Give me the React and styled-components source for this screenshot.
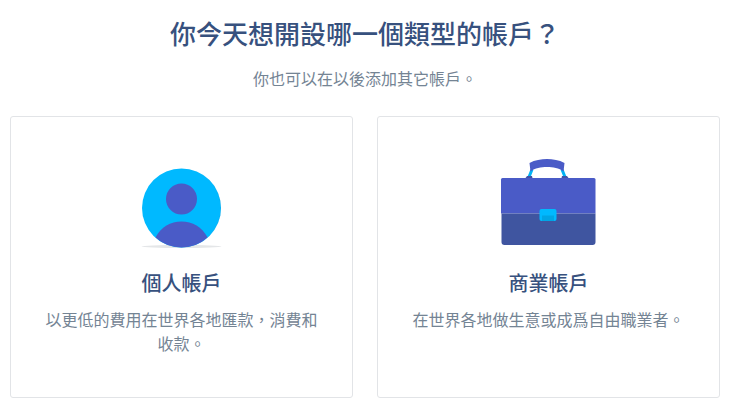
import styled, { createGlobalStyle } from "styled-components"

const GlobalStyle = createGlobalStyle`
    html, body {
        margin: 0;
        padding: 0;
        background-color: #FFFFFF;
    }
    * {
        box-sizing: border-box;
    }
`

function PersonIcon() {
    return (
        <svg width="100" height="84" viewBox="0 0 100 84">
            <ellipse cx="49.500" cy="78.500" rx="40" ry="1.500" fill="#E4E6E8" />
            <circle cx="49.500" cy="40" r="39.500" fill="#00B9FF" />
            <path d="M49.500 .5a39.500 39.500 0 0 1 0 79a39.200 39.500 0 0 0 0-79z" fill="#0A8FCB" opacity="0.6" />
            <circle cx="49.500" cy="31" r="15.500" fill="#4A5BC7" />
            <path d="M23.500 69.500C29 59 38.500 53.500 49.500 53.500S70 59 75.500 69.500A39.500 39.500 0 0 1 49.500 79.500A39.500 39.500 0 0 1 23.500 69.500z" fill="#4A5BC7" />
        </svg>
    )
}

function CaseIcon() {
    return (
        <svg width="100" height="96" viewBox="0 0 100 96">
            <path d="M33 13.500L30 21M63 13.500L66 21" fill="none" stroke="#00B4F5" strokeWidth="3" />
            <path d="M26.500 22l1.500-2h5l.5 2zM62.500 22l.5-2h5l1.500 2z" fill="#3F55A8" />
            <path d="M30.500 7C36 4 42 3 48 3S60 4 65.500 7L64.500 15.500C60 12 54 11 48 11S36 12 31.500 15.500z" fill="#4A5BC7" />
            <path d="M2 23.500A1.500 1.500 0 0 1 3.500 22H95A1.500 1.500 0 0 1 96.500 23.500V57.500H2z" fill="#4A5BC7" />
            <path d="M2.500 57.500H96.500V86A3 3 0 0 1 93.500 89H5.500A3 3 0 0 1 2.500 86z" fill="#3F55A0" />
            <rect x="40.500" y="53" width="17" height="12" rx="2" fill="#00B9FF" />
            <rect x="43" y="59.500" width="12" height="5.500" fill="#00A5E5" />
        </svg>
    )
}

export default function App() {
    return (
        <Page>
            <GlobalStyle />
            <Title>你今天想開設哪一個類型的帳戶？</Title>
            <Subtitle>你也可以在以後添加其它帳戶。</Subtitle>
            <Cards>
                <Card>
                    <IconBox><PersonIcon /></IconBox>
                    <CardTitle>個人帳戶</CardTitle>
                    <CardText>以更低的費用在世界各地匯款，消費和收款。</CardText>
                </Card>
                <Card>
                    <IconBox><CaseIcon /></IconBox>
                    <CardTitle>商業帳戶</CardTitle>
                    <CardText>在世界各地做生意或成爲自由職業者。</CardText>
                </Card>
            </Cards>
        </Page>
    )
}

const Page = styled.div`
    width: 735px;
    height: 413px;
    overflow: hidden;
    padding: 19px 15px 0 10px;
    font-family: "Liberation Sans", "Noto Sans CJK TC", sans-serif;
`

const Title = styled.h1`
    margin: 0;
    text-align: center;
    font-size: 26px;
    line-height: 32px;
    font-weight: 500;
    color: #37517E;
`

const Subtitle = styled.p`
    margin: 17px 0 0;
    text-align: center;
    font-size: 16px;
    line-height: 24px;
    color: #748494;
`

const Cards = styled.div`
    display: grid;
    grid-template-columns: 343px 343px;
    justify-content: space-between;
    margin-top: 24px;
`

const Card = styled.div`
    height: 282px;
    border: 1px solid #E2E4E7;
    border-radius: 3px;
    padding: 0 30px;
    display: flex;
    flex-direction: column;
    align-items: center;
`

const IconBox = styled.div`
    height: 96px;
    margin-top: 39px;
    display: flex;
    align-items: flex-end;
    justify-content: center;
`

const CardTitle = styled.h2`
    margin: 19px 0 0;
    font-size: 20px;
    line-height: 27px;
    font-weight: 500;
    color: #37517E;
`

const CardText = styled.p`
    margin: 11px 0 0;
    text-align: center;
    font-size: 16px;
    line-height: 24px;
    color: #748494;
`
